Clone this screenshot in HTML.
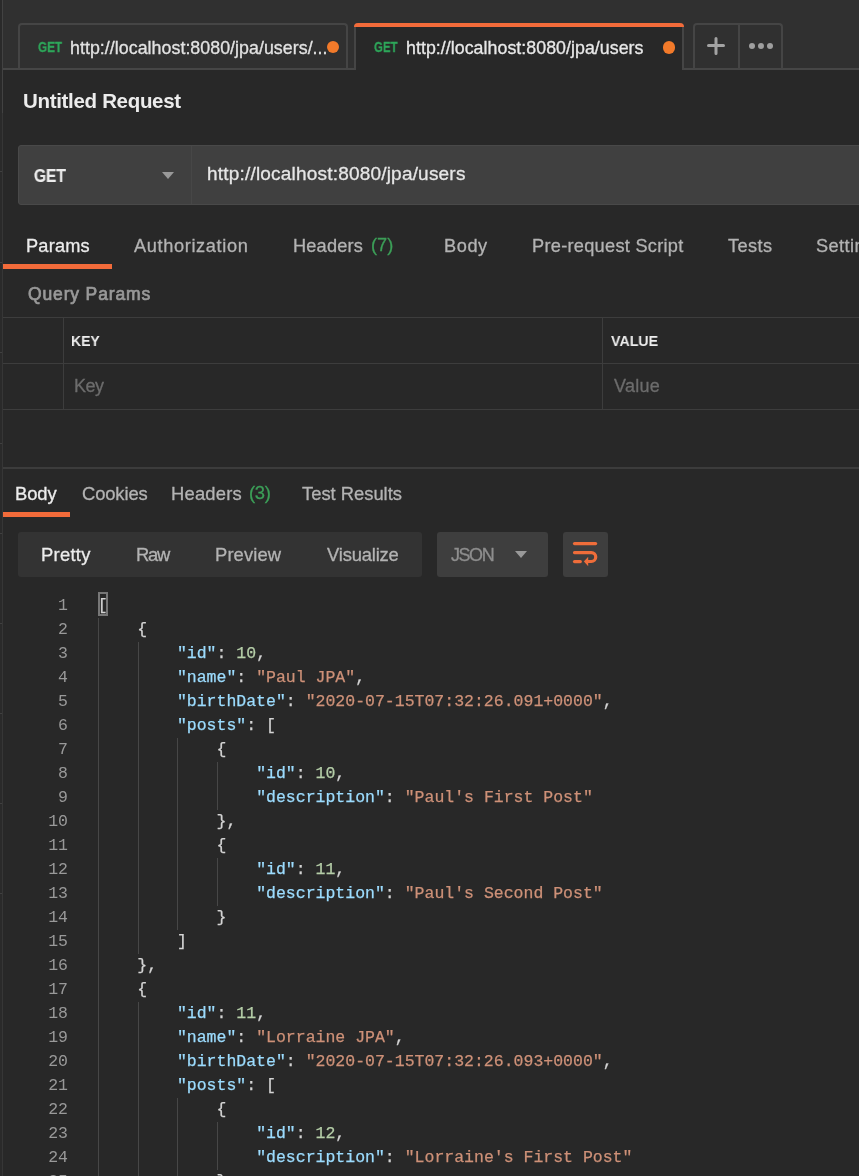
<!DOCTYPE html>
<html><head><meta charset="utf-8">
<style>
*{margin:0;padding:0;box-sizing:border-box}
html,body{width:859px;height:1176px;overflow:hidden;background:#282828;font-family:"Liberation Sans",sans-serif;color:#e6e6e6}
.a{position:absolute}
.tx{position:absolute;line-height:1;white-space:nowrap;will-change:transform}
#code{position:absolute;left:0;top:594px;width:859px;will-change:transform}
.ln{position:absolute;left:0;width:68px;text-align:right;font-family:"Liberation Mono",monospace;font-size:16.5px;color:#999999;line-height:24px}
.cl{position:absolute;left:97.7px;font-family:"Liberation Mono",monospace;font-size:16.5px;color:#d4d4d4;line-height:24px;white-space:pre;-webkit-text-stroke:0.25px currentColor}
.k{color:#9cdcfe}.s{color:#ce9178}.n{color:#b5cea8}
.guide{position:absolute;width:1px;background:#474747}

</style></head><body>
<div class="a" style="left:0;top:0;width:2px;height:1176px;background:#2a2a2a"></div>
<div class="a" style="left:3px;top:0;width:856px;height:69px;background:#303030"></div>
<div class="a" style="left:18px;top:23px;width:330px;height:46px;border:2px solid #454545;border-bottom:none;border-radius:4px 4px 0 0"></div>
<div class="a" style="left:3px;top:68px;width:353px;height:2px;background:#464646"></div>
<div class="a" style="left:682px;top:68px;width:177px;height:2px;background:#464646"></div>
<div class="a" style="left:354px;top:23px;width:330px;height:47px;background:#282828;border-left:2px solid #454545;border-right:2px solid #454545;border-radius:4px 4px 0 0"></div>
<div class="a" style="left:354px;top:23px;width:330px;height:4px;background:#f26b3a;border-radius:4px 4px 0 0"></div>
<div class="a" style="left:326.6px;top:40.9px;width:12.5px;height:12.5px;border-radius:50%;background:#f27a2a"></div>
<div class="a" style="left:662.7px;top:41.3px;width:12.5px;height:12.5px;border-radius:50%;background:#f27a2a"></div>
<div class="a" style="left:693px;top:23px;width:90px;height:46px;border:2px solid #454545;border-bottom:none;border-radius:4px 4px 0 0"></div>
<div class="a" style="left:738px;top:23px;width:2px;height:46px;background:#454545"></div>
<svg class="a" style="left:700px;top:29.3px" width="32" height="32"><path d="M16 9.5V24.5M8.5 16.5H23.5" stroke="#a3a3a3" stroke-width="3" stroke-linecap="round"/></svg>
<div class="a" style="left:748.9px;top:42.8px;width:6px;height:6px;border-radius:50%;background:#9e9e9e"></div>
<div class="a" style="left:758px;top:42.8px;width:6px;height:6px;border-radius:50%;background:#9e9e9e"></div>
<div class="a" style="left:767.1px;top:42.8px;width:6px;height:6px;border-radius:50%;background:#9e9e9e"></div>
<div class="a" style="left:2px;top:0;width:1px;height:113px;background:#424242"></div>
<div class="a" style="left:2px;top:113px;width:1px;height:1063px;background:#363636"></div>
<div class="a" style="left:0;top:171px;width:2px;height:1px;background:#404040"></div>
<div class="a" style="left:0;top:262px;width:2px;height:1px;background:#404040"></div>
<div class="a" style="left:0;top:352px;width:2px;height:1px;background:#404040"></div>
<div class="a" style="left:0;top:443px;width:2px;height:1px;background:#404040"></div>
<div class="a" style="left:0;top:533px;width:2px;height:1px;background:#404040"></div>
<div class="a" style="left:0;top:623px;width:2px;height:1px;background:#404040"></div>
<div class="a" style="left:0;top:713px;width:2px;height:1px;background:#404040"></div>
<div class="a" style="left:0;top:803px;width:2px;height:1px;background:#404040"></div>
<div class="a" style="left:0;top:893px;width:2px;height:1px;background:#404040"></div>

<div class="a" style="left:18px;top:145px;width:860px;height:60px;background:#404040;border:1px solid #494949;border-radius:3px"></div>
<div class="a" style="left:190.5px;top:146px;width:1px;height:58px;background:#474747"></div>
<svg class="a" style="left:162px;top:171.5px" width="12" height="8"><path d="M0 0H12L6 7Z" fill="#999"/></svg>

<div class="a" style="left:3px;top:264px;width:109px;height:5px;background:#f26b3a"></div>

<div class="a" style="left:3px;top:317px;width:856px;height:1px;background:#3d3d3d"></div>
<div class="a" style="left:3px;top:362.5px;width:856px;height:1px;background:#3d3d3d"></div>
<div class="a" style="left:3px;top:408.5px;width:856px;height:1px;background:#3d3d3d"></div>
<div class="a" style="left:63px;top:317px;width:1px;height:92px;background:#3d3d3d"></div>
<div class="a" style="left:602px;top:317px;width:1px;height:92px;background:#3d3d3d"></div>

<div class="a" style="left:3px;top:467px;width:856px;height:2px;background:#3c3c3c"></div>
<div class="a" style="left:3px;top:512px;width:67px;height:5px;background:#f26b3a"></div>

<div class="a" style="left:18px;top:532px;width:404px;height:45px;background:#333333;border-radius:3px"></div>
<div class="a" style="left:437px;top:532px;width:111px;height:45px;background:#3e3e3e;border-radius:3px"></div>
<svg class="a" style="left:515px;top:551px" width="12" height="8"><path d="M0 0H12L6 7Z" fill="#999"/></svg>
<div class="a" style="left:563px;top:532px;width:45px;height:45px;background:#3e3e3e;border-radius:3px"></div>
<svg class="a" style="left:563px;top:532px" width="45" height="45">
  <g stroke="#ef6d3a" stroke-width="3.2" fill="none" stroke-linecap="round">
    <path d="M11.5 11.6H32.6"/>
    <path d="M11.5 20.6H28.3a4.45 4.45 0 0 1 0 8.9H24.5"/>
    <path d="M11.5 29.6H17.3"/>
  </g>
  <path d="M20.9 29.5L25.2 24.8V34.2Z" fill="#ef6d3a"/>
</svg>

<span id="tab1get" class="tx" style="left:37.60px;top:40.30px;font-size:14.00px;font-weight:bold;color:#2ea65a;letter-spacing:0.000px;-webkit-text-stroke:0.3px #2ea65a;transform:scaleX(0.8351);transform-origin:0 0">GET</span>
<span id="tab1url" class="tx" style="left:70.00px;top:39.90px;font-size:17.80px;font-weight:normal;color:#e2e2e2;letter-spacing:0.045px;-webkit-text-stroke:0.3px #e2e2e2">http://localhost:8080/jpa/users/...</span>
<span id="tab2get" class="tx" style="left:374.29px;top:40.03px;font-size:14.00px;font-weight:bold;color:#2ea65a;letter-spacing:0.000px;-webkit-text-stroke:0.3px #2ea65a;transform:scaleX(0.8165);transform-origin:0 0">GET</span>
<span id="tab2url" class="tx" style="left:406.00px;top:40.45px;font-size:17.80px;font-weight:normal;color:#e8e8e8;letter-spacing:0.041px;-webkit-text-stroke:0.3px #e8e8e8">http://localhost:8080/jpa/users</span>
<span id="title" class="tx" style="left:22.96px;top:90.52px;font-size:20.50px;font-weight:bold;color:#ececec;letter-spacing:-0.317px;">Untitled Request</span>
<span id="get" class="tx" style="left:34.41px;top:168.00px;font-size:17.50px;font-weight:bold;color:#ececec;letter-spacing:0.000px;-webkit-text-stroke:0.2px #ececec;transform:scaleX(0.8863);transform-origin:0 0">GET</span>
<span id="url" class="tx" style="left:206.96px;top:163.77px;font-size:19.00px;font-weight:normal;color:#e6e6e6;letter-spacing:0.198px;-webkit-text-stroke:0.3px #e6e6e6">http://localhost:8080/jpa/users</span>
<span id="params" class="tx" style="left:25.50px;top:236.84px;font-size:18.20px;font-weight:normal;color:#ececec;letter-spacing:0.211px;-webkit-text-stroke:0.3px #ececec">Params</span>
<span id="auth" class="tx" style="left:133.50px;top:236.84px;font-size:18.20px;font-weight:normal;color:#b3b3b3;letter-spacing:0.641px;-webkit-text-stroke:0.3px #b3b3b3">Authorization</span>
<span id="headers" class="tx" style="left:293.00px;top:236.84px;font-size:18.20px;font-weight:normal;color:#b3b3b3;letter-spacing:0.180px;-webkit-text-stroke:0.3px #b3b3b3">Headers</span>
<span id="h7" class="tx" style="left:370.61px;top:236.31px;font-size:18.20px;font-weight:normal;color:#3c9f58;letter-spacing:0.009px;-webkit-text-stroke:0.3px #3c9f58">(7)</span>
<span id="body" class="tx" style="left:444.00px;top:236.84px;font-size:18.20px;font-weight:normal;color:#b3b3b3;letter-spacing:0.570px;-webkit-text-stroke:0.3px #b3b3b3">Body</span>
<span id="prs" class="tx" style="left:531.72px;top:237.15px;font-size:18.20px;font-weight:normal;color:#b3b3b3;letter-spacing:0.278px;-webkit-text-stroke:0.3px #b3b3b3">Pre-request Script</span>
<span id="tests" class="tx" style="left:728.22px;top:237.15px;font-size:18.20px;font-weight:normal;color:#b3b3b3;letter-spacing:0.423px;-webkit-text-stroke:0.3px #b3b3b3">Tests</span>
<span id="settings" class="tx" style="left:816.12px;top:237.15px;font-size:18.20px;font-weight:normal;color:#b3b3b3;letter-spacing:0.423px;-webkit-text-stroke:0.3px #b3b3b3">Settings</span>
<span id="qp" class="tx" style="left:27.73px;top:285.91px;font-size:17.50px;font-weight:normal;color:#999999;letter-spacing:0.850px;-webkit-text-stroke:0.7px #999999">Query Params</span>
<span id="key" class="tx" style="left:71.10px;top:332.52px;font-size:15.50px;font-weight:bold;color:#eeeeee;letter-spacing:0.000px;;transform:scaleX(0.9004);transform-origin:0 0">KEY</span>
<span id="value" class="tx" style="left:610.96px;top:332.52px;font-size:15.50px;font-weight:bold;color:#eeeeee;letter-spacing:0.000px;;transform:scaleX(0.9164);transform-origin:0 0">VALUE</span>
<span id="keyp" class="tx" style="left:74.06px;top:376.88px;font-size:18.00px;font-weight:normal;color:#6c6c6c;letter-spacing:-0.522px;-webkit-text-stroke:0.3px #6c6c6c">Key</span>
<span id="valuep" class="tx" style="left:614.02px;top:377.18px;font-size:18.00px;font-weight:normal;color:#6c6c6c;letter-spacing:0.257px;-webkit-text-stroke:0.3px #6c6c6c">Value</span>
<span id="rbody" class="tx" style="left:15.25px;top:484.81px;font-size:18.40px;font-weight:normal;color:#ececec;letter-spacing:-0.096px;-webkit-text-stroke:0.3px #ececec">Body</span>
<span id="cookies" class="tx" style="left:81.50px;top:484.94px;font-size:18.40px;font-weight:normal;color:#b3b3b3;letter-spacing:-0.126px;-webkit-text-stroke:0.3px #b3b3b3">Cookies</span>
<span id="rheaders" class="tx" style="left:170.80px;top:484.52px;font-size:18.40px;font-weight:normal;color:#b3b3b3;letter-spacing:0.210px;-webkit-text-stroke:0.3px #b3b3b3">Headers</span>
<span id="h3" class="tx" style="left:248.84px;top:483.82px;font-size:18.40px;font-weight:normal;color:#3c9f58;letter-spacing:-0.266px;-webkit-text-stroke:0.3px #3c9f58">(3)</span>
<span id="testres" class="tx" style="left:302.25px;top:484.81px;font-size:18.40px;font-weight:normal;color:#b3b3b3;letter-spacing:-0.020px;-webkit-text-stroke:0.3px #b3b3b3">Test Results</span>
<span id="pretty" class="tx" style="left:40.88px;top:545.72px;font-size:18.40px;font-weight:normal;color:#ececec;letter-spacing:0.284px;-webkit-text-stroke:0.3px #ececec">Pretty</span>
<span id="raw" class="tx" style="left:135.50px;top:545.81px;font-size:18.40px;font-weight:normal;color:#b3b3b3;letter-spacing:-1.260px;-webkit-text-stroke:0.3px #b3b3b3">Raw</span>
<span id="preview" class="tx" style="left:214.80px;top:545.72px;font-size:18.40px;font-weight:normal;color:#b3b3b3;letter-spacing:0.115px;-webkit-text-stroke:0.3px #b3b3b3">Preview</span>
<span id="visualize" class="tx" style="left:327.00px;top:545.81px;font-size:18.40px;font-weight:normal;color:#b3b3b3;letter-spacing:-0.178px;-webkit-text-stroke:0.3px #b3b3b3">Visualize</span>
<span id="json" class="tx" style="left:450.74px;top:546.44px;font-size:18.00px;font-weight:normal;color:#8e8e8e;letter-spacing:-1.446px;-webkit-text-stroke:0.3px #8e8e8e">JSON</span>
<div id="code">
<div class="ln" style="top:0px">1</div>
<div class="cl" style="top:0px">[</div>
<div class="ln" style="top:24px">2</div>
<div class="cl" style="top:24px">    {</div>
<div class="ln" style="top:48px">3</div>
<div class="cl" style="top:48px">        <span class="k">"id"</span>: <span class="n">10</span>,</div>
<div class="ln" style="top:72px">4</div>
<div class="cl" style="top:72px">        <span class="k">"name"</span>: <span class="s">"Paul JPA"</span>,</div>
<div class="ln" style="top:96px">5</div>
<div class="cl" style="top:96px">        <span class="k">"birthDate"</span>: <span class="s">"2020-07-15T07:32:26.091+0000"</span>,</div>
<div class="ln" style="top:120px">6</div>
<div class="cl" style="top:120px">        <span class="k">"posts"</span>: [</div>
<div class="ln" style="top:144px">7</div>
<div class="cl" style="top:144px">            {</div>
<div class="ln" style="top:168px">8</div>
<div class="cl" style="top:168px">                <span class="k">"id"</span>: <span class="n">10</span>,</div>
<div class="ln" style="top:192px">9</div>
<div class="cl" style="top:192px">                <span class="k">"description"</span>: <span class="s">"Paul's First Post"</span></div>
<div class="ln" style="top:216px">10</div>
<div class="cl" style="top:216px">            },</div>
<div class="ln" style="top:240px">11</div>
<div class="cl" style="top:240px">            {</div>
<div class="ln" style="top:264px">12</div>
<div class="cl" style="top:264px">                <span class="k">"id"</span>: <span class="n">11</span>,</div>
<div class="ln" style="top:288px">13</div>
<div class="cl" style="top:288px">                <span class="k">"description"</span>: <span class="s">"Paul's Second Post"</span></div>
<div class="ln" style="top:312px">14</div>
<div class="cl" style="top:312px">            }</div>
<div class="ln" style="top:336px">15</div>
<div class="cl" style="top:336px">        ]</div>
<div class="ln" style="top:360px">16</div>
<div class="cl" style="top:360px">    },</div>
<div class="ln" style="top:384px">17</div>
<div class="cl" style="top:384px">    {</div>
<div class="ln" style="top:408px">18</div>
<div class="cl" style="top:408px">        <span class="k">"id"</span>: <span class="n">11</span>,</div>
<div class="ln" style="top:432px">19</div>
<div class="cl" style="top:432px">        <span class="k">"name"</span>: <span class="s">"Lorraine JPA"</span>,</div>
<div class="ln" style="top:456px">20</div>
<div class="cl" style="top:456px">        <span class="k">"birthDate"</span>: <span class="s">"2020-07-15T07:32:26.093+0000"</span>,</div>
<div class="ln" style="top:480px">21</div>
<div class="cl" style="top:480px">        <span class="k">"posts"</span>: [</div>
<div class="ln" style="top:504px">22</div>
<div class="cl" style="top:504px">            {</div>
<div class="ln" style="top:528px">23</div>
<div class="cl" style="top:528px">                <span class="k">"id"</span>: <span class="n">12</span>,</div>
<div class="ln" style="top:552px">24</div>
<div class="cl" style="top:552px">                <span class="k">"description"</span>: <span class="s">"Lorraine's First Post"</span></div>
<div class="ln" style="top:576px">25</div>
<div class="cl" style="top:576px">            }</div>
<div class="guide" style="left:98.0px;top:24px;height:576px"></div>
<div class="guide" style="left:137.6px;top:48px;height:312px"></div>
<div class="guide" style="left:137.6px;top:408px;height:192px"></div>
<div class="guide" style="left:177.2px;top:144px;height:192px"></div>
<div class="guide" style="left:177.2px;top:504px;height:96px"></div>
<div class="guide" style="left:216.8px;top:168px;height:48px"></div>
<div class="guide" style="left:216.8px;top:264px;height:48px"></div>
<div class="guide" style="left:216.8px;top:528px;height:48px"></div>
<div style="position:absolute;left:98px;top:-2px;width:10px;height:24px;border:2px solid #777777"></div>
</div>
</body></html>
